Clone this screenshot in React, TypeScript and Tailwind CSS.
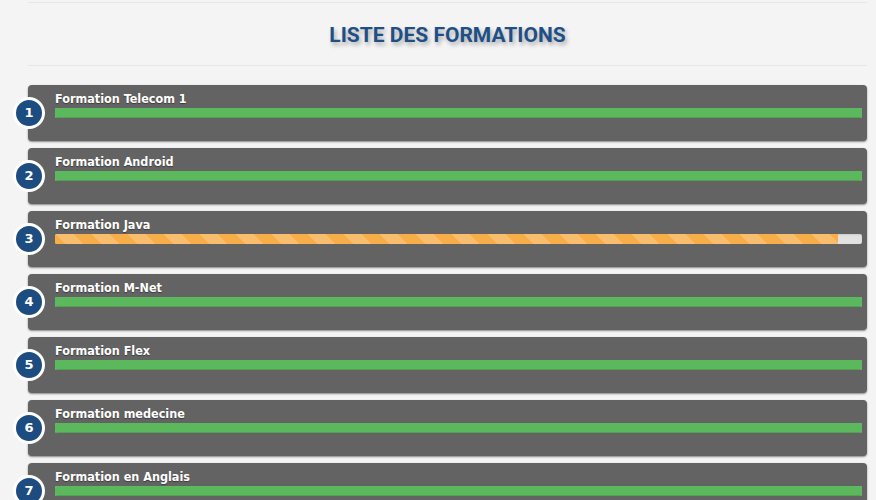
const formations = [
  { name: "Formation Telecom 1", progress: 100, status: "done" },
  { name: "Formation Android", progress: 100, status: "done" },
  { name: "Formation Java", progress: 97, status: "running" },
  { name: "Formation M-Net", progress: 100, status: "done" },
  { name: "Formation Flex", progress: 100, status: "done" },
  { name: "Formation medecine", progress: 100, status: "done" },
  { name: "Formation en Anglais", progress: 100, status: "done" },
];

function FormationRow({ index, name, progress, status }: { index: number; name: string; progress: number; status: string }) {
  return (
    <div className="relative h-[56px] rounded-[4px] bg-[#636363] pl-[27px] pr-[5px] pt-[6px] shadow-[0_1px_2px_rgba(0,0,0,0.45)]">
      {/* number badge */}
      <div className="absolute left-[-15px] top-1/2 flex h-[32px] w-[32px] -translate-y-1/2 items-center justify-center rounded-full border-[3px] border-white bg-[#1d4c80] text-[13px] font-bold text-white">
        {index}
      </div>
      <div className="font-['DejaVu_Sans_Condensed','DejaVu_Sans',sans-serif] text-[12.5px] leading-[16px] font-bold text-white [text-shadow:0_1px_1px_rgba(0,0,0,0.4)]">
        {name}
      </div>
      {/* progress */}
      <div className="mt-px h-[10px] w-full overflow-hidden rounded-[2px] bg-[#e2e2e2] shadow-[inset_0_1px_2px_rgba(0,0,0,0.1)]">
        {status === "running" ? (
          <div
            className="h-full bg-[#f8ae48] bg-[linear-gradient(45deg,rgba(255,255,255,0.2)_25%,transparent_25%,transparent_50%,rgba(255,255,255,0.2)_50%,rgba(255,255,255,0.2)_75%,transparent_75%,transparent)] bg-[length:36px_36px]"
            style={{ width: `${progress}%` }}
          />
        ) : (
          <div
            className="h-full bg-[#5cb85c] shadow-[inset_0_-1px_0_rgba(0,0,0,0.12)]"
            style={{ width: `${progress}%` }}
          />
        )}
      </div>
    </div>
  );
}

export default function App() {
  return (
    <div className="min-h-screen bg-[#f4f4f4] pl-[28px] pr-[9px] pt-[2px] font-['DejaVu_Sans',sans-serif]">
      {/* header */}
      <div className="flex h-[64px] items-center justify-center border-y border-[#e6e6e6]">
        <h1 className="pt-[3px] font-['Roboto',sans-serif] text-[21px] font-bold tracking-[0px] text-[#1e4f86] [text-shadow:2px_3px_4px_rgba(0,0,0,0.3)]">
          LISTE DES FORMATIONS
        </h1>
      </div>

      <div className="mt-[19px] flex flex-col gap-[7px]">
        {formations.map((f, i) => (
          <FormationRow key={f.name} index={i + 1} name={f.name} progress={f.progress} status={f.status} />
        ))}
      </div>
    </div>
  );
}
